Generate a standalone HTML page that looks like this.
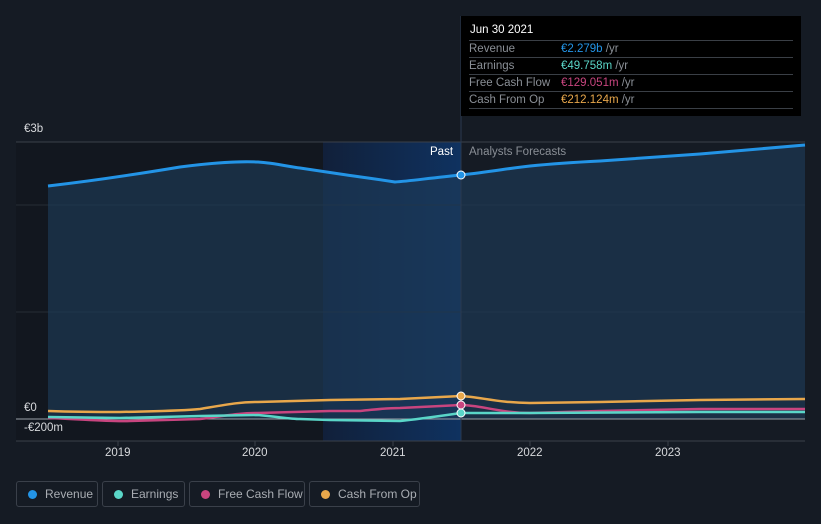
<!DOCTYPE html>
<html><head><style>
body{margin:0;width:821px;height:524px;background:#151b24;font-family:"Liberation Sans",sans-serif;overflow:hidden;position:relative}
.tt{position:absolute;left:461px;top:16px;width:340px;height:100px;background:#000}
.tt .h{position:absolute;left:9px;top:8px;color:#fff;font-size:11.5px}
.row{position:absolute;left:8px;width:324px;border-top:1px solid #3a3f46;height:17px;font-size:11.5px;color:#8a8f96}
.row span{position:absolute;left:92px;top:2px}
.row b{font-weight:normal}
.row i{font-style:normal;position:absolute;left:0;top:2px}
.lg{position:absolute;top:481px;height:26px;border:1px solid #3a404a;border-radius:3px;color:#a9adb3;font-size:12px;line-height:25px;box-sizing:border-box}
.lg::before{content:"";position:absolute;left:11px;top:8px;width:9px;height:9px;border-radius:50%;background:var(--c)}
.lg{padding-left:28px}
.ax{position:absolute;color:#d7d9dc;font-size:11.5px}
</style></head><body>
<svg width="821" height="524" style="position:absolute;left:0;top:0">
<defs><linearGradient id="g" x1="0" x2="1"><stop offset="0" stop-color="#11203a"/><stop offset="1" stop-color="#0f3260"/></linearGradient></defs>
<rect x="16" y="142" width="307" height="299" fill="#12171f"/>
<rect x="323" y="142" width="138" height="299" fill="url(#g)"/>
<line x1="16" y1="142" x2="805" y2="142" stroke="#3a404a"/>
<line x1="16" y1="205" x2="805" y2="205" stroke="#252c36"/>
<line x1="16" y1="312" x2="805" y2="312" stroke="#252c36"/>
<line x1="16" y1="441" x2="805" y2="441" stroke="#3a404a"/>
<path d="M48,186 C100,180 150,172 180,167 C210,163 240,161 258,162 C275,163 290,167 300,168 L340,174 C360,177 370,178 395,182 C410,181 430,178 461,175 C490,172 510,168 530,166 C560,163 580,162 600,161 L700,154 C750,150 780,147 805,145 L805,419 L48,419Z" fill="#1d3a58" opacity="0.65"/>
<path d="M48,186 C100,180 150,172 180,167 C210,163 240,161 258,162 C275,163 290,167 300,168 L340,174 C360,177 370,178 395,182 C410,181 430,178 461,175 C490,172 510,168 530,166 C560,163 580,162 600,161 L700,154 C750,150 780,147 805,145" fill="none" stroke="#2394e6" stroke-width="3"/>
<line x1="16" y1="419" x2="805" y2="419" stroke="#9aa0a8" stroke-width="1"/>
<path d="M48,411 C80,412 100,412 120,412 C160,411 180,411 200,409 C230,404 240,402 258,402 L330,400 L400,399 L461,396 C480,397 500,403 530,403 L600,402 L700,400 L805,399" fill="none" stroke="#e8a74b" stroke-width="2.5"/>
<path d="M48,418 C80,419 110,422 130,421 L200,419 C230,415 240,413 258,413 L330,411 L360,411 C380,409 385,408 400,408 L461,405 C480,405 500,413 530,413 L600,411 L700,409 L805,409" fill="none" stroke="#c8457f" stroke-width="2.5"/>
<path d="M48,417 L120,418 L200,416 L258,415 C280,417 290,419 300,419 L330,420 L400,421 C420,419 440,416 461,413 L530,413 L700,412 L805,412" fill="none" stroke="#5ad6c8" stroke-width="2.5"/>
<line x1="461" y1="16" x2="461" y2="441" stroke="#2a3a50"/>
<circle cx="461" cy="175" r="4" fill="#2394e6" stroke="#fff" stroke-width="1"/>
<circle cx="461" cy="396" r="4" fill="#e8a74b" stroke="#fff" stroke-width="1"/>
<circle cx="461" cy="405" r="4" fill="#c8457f" stroke="#fff" stroke-width="1"/>
<circle cx="461" cy="413" r="4" fill="#5ad6c8" stroke="#fff" stroke-width="1"/>
<g stroke="#3a404a"><line x1="118" y1="441" x2="118" y2="446"/><line x1="255" y1="441" x2="255" y2="446"/><line x1="393" y1="441" x2="393" y2="446"/><line x1="530" y1="441" x2="530" y2="446"/><line x1="668" y1="441" x2="668" y2="446"/></g>
</svg>
<div class="ax" style="left:24px;top:123px">€3b</div>
<div class="ax" style="left:24px;top:402px">€0</div>
<div class="ax" style="left:24px;top:422px">-€200m</div>
<div class="ax" style="left:105px;top:447px">2019</div>
<div class="ax" style="left:242px;top:447px">2020</div>
<div class="ax" style="left:380px;top:447px">2021</div>
<div class="ax" style="left:517px;top:447px">2022</div>
<div class="ax" style="left:655px;top:447px">2023</div>
<div class="ax" style="left:430px;top:146px;color:#fff">Past</div>
<div class="ax" style="left:469px;top:146px;color:#8a8f96">Analysts Forecasts</div>
<div class="tt">
<div class="h">Jun 30 2021</div>
<div class="row" style="top:24px"><i>Revenue</i><span><b style="color:#2394e6">€2.279b</b> /yr</span></div>
<div class="row" style="top:41px"><i>Earnings</i><span><b style="color:#5ad6c8">€49.758m</b> /yr</span></div>
<div class="row" style="top:58px"><i>Free Cash Flow</i><span><b style="color:#c8457f">€129.051m</b> /yr</span></div>
<div class="row" style="top:75px"><i>Cash From Op</i><span><b style="color:#e8a74b">€212.124m</b> /yr</span></div>
<div class="row" style="top:92px;height:0"></div>
</div>
<div class="lg" style="left:16px;width:82px;--c:#2394e6">Revenue</div>
<div class="lg" style="left:102px;width:83px;--c:#5ad6c8">Earnings</div>
<div class="lg" style="left:189px;width:116px;--c:#c8457f">Free Cash Flow</div>
<div class="lg" style="left:309px;width:111px;--c:#e8a74b">Cash From Op</div>
</body></html>
